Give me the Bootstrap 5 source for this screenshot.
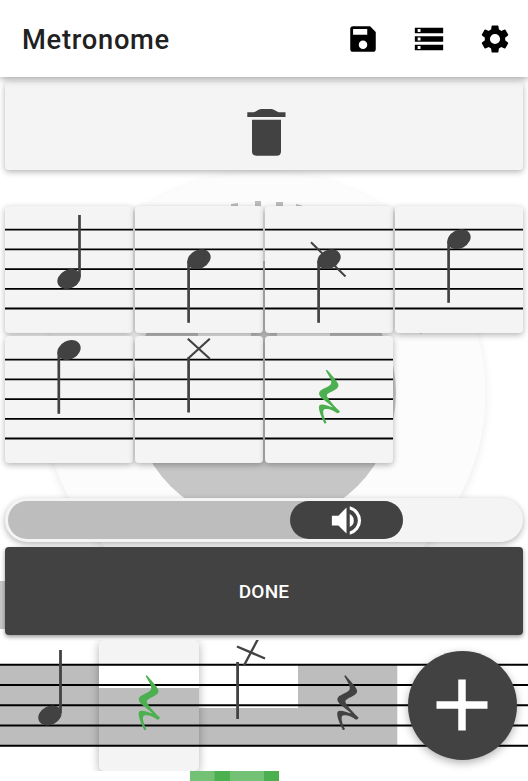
<!DOCTYPE html>
<html lang="en">
<head>
<meta charset="utf-8">
<meta name="viewport" content="width=device-width, initial-scale=1">
<title>Metronome</title>
<link href="https://cdn.jsdelivr.net/npm/bootstrap@5.3.0/dist/css/bootstrap.min.css" rel="stylesheet">
<style>
body{font-family:Roboto,sans-serif;background:#fff;width:528px;height:781px}
svg{display:block}
.app-bar{height:77px;padding:0 16px 0 22px;box-shadow:0 1px 8px rgba(0,0,0,.45);z-index:1}
.app-title{font-size:27.3px;font-weight:500;letter-spacing:.72px;color:#212121;line-height:1;padding-top:4px}
.app-actions{gap:32px}
.dial{left:0;top:77px;z-index:-1}
.panel{padding:5px 5px 0 5px}
.surface{background:#f4f4f4;border-radius:4px;box-shadow:0 2px 6px rgba(0,0,0,.3)}
.trash{height:88px;color:#424242}
.note-grid{display:grid;grid-template-columns:repeat(4,128px);gap:3px 2px;margin-top:36px}
.note-tile{height:127px;color:#424242}
.rest-on{color:#4caf50}
.volume{height:44px;margin-top:35px;border-radius:22px;padding:3px}
.volume-level{width:395.3px;height:38px;border-radius:20px;background:#bdbdbd}
.volume-thumb{width:113.6px;height:38px;border-radius:20px;background:#424242;color:#fff}
.done-btn{height:88px;margin-top:5px;border-radius:4px;background:#424242;color:#fff;font-size:19px;font-weight:500;letter-spacing:.2px;box-shadow:0 2px 4px rgba(0,0,0,.4)}
.done-btn:hover{background:#424242;color:#fff}
.done-btn span{padding-top:2px}
.staff{height:131px;margin-top:5px;overflow:hidden;color:#424242}
.bar-cell{width:99px;height:131px;flex:none}
.bar-wide{width:100px}
.bar-rest{flex:1}
.selected-cell{background:#f4f4f4;border-radius:5px;box-shadow:0 2px 10px rgba(0,0,0,.3);z-index:1}
.ticks{height:10px;padding-left:190px}
.add-btn{left:408.2px;top:651px;width:108.6px;height:108.6px;background:#424242;box-shadow:0 3px 9px rgba(0,0,0,.3);z-index:2}
</style>
<script src="https://cdn.jsdelivr.net/npm/bootstrap@5.3.0/dist/js/bootstrap.bundle.min.js"></script>
</head>
<body class="position-relative overflow-hidden">
<svg width="0" height="0" class="position-absolute">
<defs>
<g id="lines"><path d="M0 23.700H128M0 43.400H128M0 63.100H128M0 82.800H128M0 102.500H128" stroke="#000" stroke-width="1.800"/></g>
<g id="barlines"><path d="M0 24.700H132M0 45H132M0 65.200H132M0 85.500H132M0 105.700H132" stroke="#000" stroke-width="1.900"/></g>
<ellipse id="head" rx="12.200" ry="9.200" transform="rotate(-27)" fill="currentColor"/>
<path id="rest" fill="currentColor" transform="scale(.3333) translate(-165 -118)" d="M188 118.500L191 121C205 138 223 155 223.500 166C223 181 188 186 188.500 196C189 204 214 231 227.500 243Q227 248 220 249.500C207 239 183 231 178 241C176 250 181 264 187.500 277Q185 281 181 279C173 262 160 234 166.500 225C174 219 193 228 206 231C193 217 166 204 165 190C166 174 200 173 202 158C202 145 190 131 185.500 121Z"/>
</defs>
</svg>

<svg class="dial position-absolute" width="528" height="560" viewBox="0 77 528 560">
<defs><filter id="soft" x="-10%" y="-10%" width="120%" height="120%"><feGaussianBlur stdDeviation="5"/></filter></defs>
<circle cx="264" cy="396" r="221.500" fill="#000" opacity=".08" filter="url(#soft)"/>
<circle cx="264" cy="393" r="221.500" fill="#fcfcfc"/>
<path d="M231 204L238 203V208H231ZM255 201H261V208H255ZM276 202H283V208H276ZM296 204L302 205.500V208H296Z" fill="#bdbdbd"/>
<circle cx="264" cy="393" r="132" fill="#c6c6c6"/>
<path d="M198 330H251V340H198ZM277 330H330V340H277Z" fill="#f4f4f4"/>
<path d="M420 331H426L420 334Z" fill="#bdbdbd"/>
<rect x="-20" y="581" width="40" height="48" rx="4" fill="#c6c6c6"/>
</svg>

<header class="app-bar bg-white d-flex align-items-center justify-content-between position-relative">
<h1 class="app-title m-0">Metronome</h1>
<div class="app-actions d-flex align-items-center">
<svg width="34" height="34" viewBox="0 0 24 24"><path fill-rule="evenodd" d="M17 3H5a2 2 0 0 0-2 2v14a2 2 0 0 0 2 2h14a2 2 0 0 0 2-2V7zM12 19a3 3 0 1 1 0-6 3 3 0 0 1 0 6zM15 9H5V5h10z"/></svg>
<svg width="34" height="34" viewBox="0 0 24 24"><path fill-rule="evenodd" d="M2 20h20v-4H2zm2-3h2v2H4zM2 4v4h20V4zm4 3H4V5h2zM2 14h20v-4H2zm2-3h2v2H4z"/></svg>
<svg width="34" height="34" viewBox="0 0 24 24"><path d="M19.140 12.940c.04-.3.060-.61.060-.94 0-.32-.02-.64-.07-.94l2.030-1.580a.49.490 0 0 0 .12-.61l-1.920-3.320a.488.488 0 0 0-.59-.22l-2.390.96c-.5-.38-1.030-.7-1.620-.94l-.36-2.540a.484.484 0 0 0-.48-.41h-3.840c-.24 0-.43.170-.47.410l-.36 2.540c-.59.240-1.130.570-1.620.940l-2.390-.96c-.22-.08-.47 0-.59.220L2.740 8.870c-.12.210-.08.470.12.610l2.030 1.580c-.05.3-.09.630-.09.940s.02.640.070.940l-2.030 1.580a.49.490 0 0 0-.12.610l1.920 3.320c.12.220.370.290.590.220l2.390-.96c.5.380 1.030.7 1.620.940l.36 2.540c.05.240.240.410.480.410h3.840c.24 0 .44-.17.470-.41l.36-2.540c.59-.24 1.130-.56 1.620-.94l2.390.96c.22.080.47 0 .59-.22l1.920-3.320c.12-.22.070-.47-.12-.61zM12 15.600A3.600 3.600 0 1 1 12 8.400a3.600 3.600 0 0 1 0 7.200z"/></svg>
</div>
</header>

<main>
<div class="panel">
<div class="surface trash d-flex justify-content-center">
<svg width="66" height="65" viewBox="0 0 66 65" class="mt-3 ms-1"><path fill="currentColor" d="M14.300 14.300H20.800C23.300 13.800 24.800 11.300 28.300 11H38.300C41.300 11.300 43.300 13.800 45.800 14.300H52.500V19H14.300ZM19 21.700H48V53.500Q48 57.700 43.500 57.700H23.500Q19 57.700 19 53.500Z"/></svg>
</div>
<div class="note-grid">
<div class="surface note-tile"><svg width="128" height="127"><use href="#lines"/><use href="#head" x="64" y="73"/><path d="M74.500 9V71" stroke="currentColor" stroke-width="2.700"/></svg></div>
<div class="surface note-tile"><svg width="128" height="127"><use href="#lines"/><use href="#head" x="64" y="53.200"/><path d="M53.600 55V116.800" stroke="currentColor" stroke-width="2.700"/></svg></div>
<div class="surface note-tile"><svg width="128" height="127"><use href="#lines"/><use href="#head" x="64" y="53.200"/><path d="M53.600 55V116.800" stroke="currentColor" stroke-width="2.700"/><path d="M46 36.200L80.500 70.500" stroke="currentColor" stroke-width="2"/></svg></div>
<div class="surface note-tile"><svg width="128" height="127"><use href="#lines"/><use href="#head" x="64" y="33.200"/><path d="M53.600 35V96.800" stroke="currentColor" stroke-width="2.700"/></svg></div>
<div class="surface note-tile"><svg width="128" height="127"><use href="#lines"/><use href="#head" x="64" y="14"/><path d="M53.800 16V77.800" stroke="currentColor" stroke-width="2.700"/></svg></div>
<div class="surface note-tile"><svg width="128" height="127"><use href="#lines"/><path d="M52.800 2.800L74.800 22.800M74.800 2.800L52.800 22.800" stroke="currentColor" stroke-width="2.200"/><path d="M53.600 21.500V76.500" stroke="currentColor" stroke-width="2.700"/></svg></div>
<div class="surface note-tile rest-on"><svg width="128" height="127"><use href="#lines"/><use href="#rest" x="54" y="33.500"/></svg></div>
</div>
<div class="surface volume">
<div class="volume-level d-flex justify-content-end">
<div class="volume-thumb d-flex align-items-center justify-content-center"><svg width="39" height="39" viewBox="0 0 24 24"><path fill="currentColor" d="M3 9v6h4l5 5V4L7 9zm13.500 3A4.500 4.500 0 0 0 14 7.970v8.050A4.500 4.500 0 0 0 16.500 12zM14 3.230v2.060a7.003 7.003 0 0 1 0 13.420v2.060a9.003 9.003 0 0 0 0-17.540z"/></svg></div>
</div>
</div>
<button type="button" class="btn done-btn border-0 w-100 d-flex align-items-center justify-content-center p-0"><span>DONE</span></button>
</div>

<div class="staff d-flex">
<div class="bar-cell"><svg width="99" height="131"><path d="M0 24.700H99V105.700H0Z" fill="#bdbdbd"/><use href="#barlines"/><use href="#head" x="49.900" y="75.500"/><path d="M60.500 10V73" stroke="currentColor" stroke-width="2.800"/></svg></div>
<div class="bar-cell bar-wide selected-cell position-relative rest-on"><svg width="100" height="131"><path d="M0 24.700H100V48H0Z" fill="#fff"/><path d="M0 48H100V105.700H0Z" fill="#bdbdbd"/><use href="#barlines"/><g transform="translate(39.700 35) scale(1.020)"><use href="#rest"/></g></svg></div>
<div class="bar-cell"><svg width="99" height="131"><path d="M0 68H99V105.700H0Z" fill="#bdbdbd"/><use href="#barlines"/><path d="M38 6.500L66 18.500M59.500-2L45 25.500" stroke="currentColor" stroke-width="2.400"/><path d="M38.600 22V79" stroke="currentColor" stroke-width="2.800"/></svg></div>
<div class="bar-cell bar-wide"><svg width="100" height="131"><path d="M0 24.700H99.300V105.700H0Z" fill="#bdbdbd"/><use href="#barlines"/><g transform="translate(39.300 35) scale(1.020)"><use href="#rest"/></g></svg></div>
<div class="bar-rest"><svg width="131" height="131"><use href="#barlines"/></svg></div>
</div>
<div class="ticks d-flex"><svg width="89" height="11"><path d="M0 0H89V11H0Z" fill="#72c175"/><path d="M24.500 0H40V11H24.500ZM74 0H89V11H74Z" fill="#4caf50"/></svg></div>
</main>
<button type="button" class="btn add-btn rounded-circle position-absolute border-0 p-0 d-flex align-items-center justify-content-center" aria-label="Add"><svg width="52" height="52"><path d="M0.500 26H51.500M26 0.500V51.500" stroke="#fff" stroke-width="7.500"/></svg></button>
</body>
</html>
